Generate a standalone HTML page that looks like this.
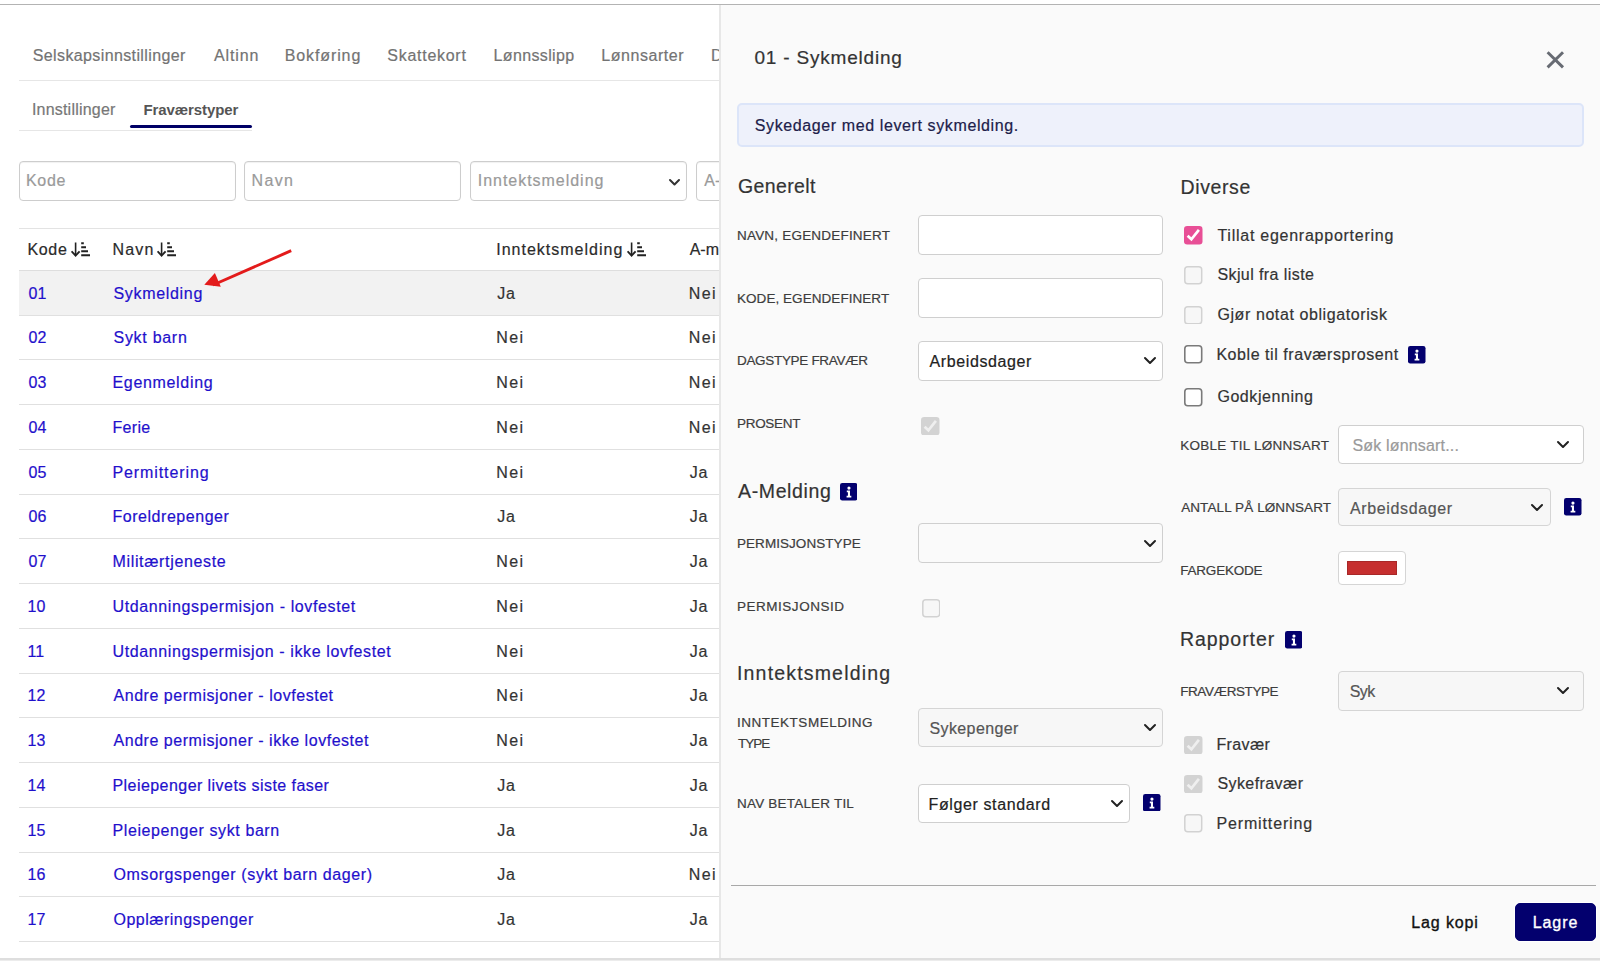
<!DOCTYPE html>
<html><head><meta charset="utf-8"><style>
html,body{margin:0;padding:0;width:1600px;height:961px;overflow:hidden;background:#fff;position:relative}
body{font-family:"Liberation Sans",sans-serif}
.t{position:absolute;white-space:nowrap;line-height:normal}
</style></head><body>
<div style="position:absolute;left:0px;top:4px;width:1600px;height:1px;background:#b3b3b3"></div>
<div style="position:absolute;left:19px;top:80px;width:701px;height:1px;background:#e6e6e6"></div>
<div style="position:absolute;left:130px;top:125px;width:122px;height:3px;background:#000066;border-radius:1.5px"></div>
<div style="position:absolute;left:19px;top:130px;width:233px;height:1px;background:#e6e6e6"></div>
<div style="position:absolute;left:19px;top:161px;width:217px;height:40px;box-sizing:border-box;background:#fff;border:1px solid #cdcdcd;border-radius:4px;box-shadow:inset 0 1px 1px rgba(0,0,0,0.06)"></div>
<div style="position:absolute;left:244px;top:161px;width:217px;height:40px;box-sizing:border-box;background:#fff;border:1px solid #cdcdcd;border-radius:4px;box-shadow:inset 0 1px 1px rgba(0,0,0,0.06)"></div>
<div style="position:absolute;left:470px;top:161px;width:217px;height:40px;box-sizing:border-box;background:#fff;border:1px solid #cdcdcd;border-radius:4px;box-shadow:inset 0 1px 1px rgba(0,0,0,0.06)"></div>
<div style="position:absolute;left:696px;top:161px;width:217px;height:40px;box-sizing:border-box;background:#fff;border:1px solid #cdcdcd;border-radius:4px;box-shadow:inset 0 1px 1px rgba(0,0,0,0.06)"></div>
<svg style="position:absolute;left:667.4px;top:176.5px" width="15" height="10.5"><path d="M3 3 L7.5 7.5 L12 3" fill="none" stroke="#333" stroke-width="2" stroke-linecap="round" stroke-linejoin="round"/></svg>
<div style="position:absolute;left:19px;top:228px;width:701px;height:1px;background:#e3e3e3"></div>
<svg style="position:absolute;left:71px;top:242px" width="20" height="15" viewBox="0 0 20 15"><path d="M4.6 0.5V13" stroke="#222" stroke-width="1.6" fill="none"/><path d="M0.6 9.3L4.6 13.6L8.6 9.3" stroke="#222" stroke-width="1.9" fill="none" stroke-linejoin="miter"/><path d="M10.2 1.2h2.6M10.2 5.2h4.8M10.2 9.2h6.8M10.2 13.2h8.8" stroke="#222" stroke-width="1.9" fill="none"/></svg>
<svg style="position:absolute;left:157px;top:242px" width="20" height="15" viewBox="0 0 20 15"><path d="M4.6 0.5V13" stroke="#222" stroke-width="1.6" fill="none"/><path d="M0.6 9.3L4.6 13.6L8.6 9.3" stroke="#222" stroke-width="1.9" fill="none" stroke-linejoin="miter"/><path d="M10.2 1.2h2.6M10.2 5.2h4.8M10.2 9.2h6.8M10.2 13.2h8.8" stroke="#222" stroke-width="1.9" fill="none"/></svg>
<svg style="position:absolute;left:626.9px;top:242px" width="20" height="15" viewBox="0 0 20 15"><path d="M4.6 0.5V13" stroke="#222" stroke-width="1.6" fill="none"/><path d="M0.6 9.3L4.6 13.6L8.6 9.3" stroke="#222" stroke-width="1.9" fill="none" stroke-linejoin="miter"/><path d="M10.2 1.2h2.6M10.2 5.2h4.8M10.2 9.2h6.8M10.2 13.2h8.8" stroke="#222" stroke-width="1.9" fill="none"/></svg>
<div style="position:absolute;left:19px;top:270px;width:701px;height:1px;background:#dedede"></div>
<div style="position:absolute;left:19px;top:271px;width:701px;height:44px;background:#f2f2f2"></div>
<div style="position:absolute;left:19px;top:315px;width:701px;height:1px;background:#e0e0e0"></div>
<div style="position:absolute;left:19px;top:359px;width:701px;height:1px;background:#e0e0e0"></div>
<div style="position:absolute;left:19px;top:404px;width:701px;height:1px;background:#e0e0e0"></div>
<div style="position:absolute;left:19px;top:449px;width:701px;height:1px;background:#e0e0e0"></div>
<div style="position:absolute;left:19px;top:494px;width:701px;height:1px;background:#e0e0e0"></div>
<div style="position:absolute;left:19px;top:538px;width:701px;height:1px;background:#e0e0e0"></div>
<div style="position:absolute;left:19px;top:583px;width:701px;height:1px;background:#e0e0e0"></div>
<div style="position:absolute;left:19px;top:628px;width:701px;height:1px;background:#e0e0e0"></div>
<div style="position:absolute;left:19px;top:673px;width:701px;height:1px;background:#e0e0e0"></div>
<div style="position:absolute;left:19px;top:717px;width:701px;height:1px;background:#e0e0e0"></div>
<div style="position:absolute;left:19px;top:762px;width:701px;height:1px;background:#e0e0e0"></div>
<div style="position:absolute;left:19px;top:807px;width:701px;height:1px;background:#e0e0e0"></div>
<div style="position:absolute;left:19px;top:852px;width:701px;height:1px;background:#e0e0e0"></div>
<div style="position:absolute;left:19px;top:896px;width:701px;height:1px;background:#e0e0e0"></div>
<div style="position:absolute;left:19px;top:941px;width:701px;height:1px;background:#e0e0e0"></div>
<div style="position:absolute;left:0px;top:958px;width:1600px;height:3px;background:#dedede"></div>
<div style="position:absolute;left:0px;top:960px;width:1600px;height:1px;background:#ececec"></div>
<svg style="position:absolute;left:0;top:0" width="720" height="400"><path d="M291.2 250.7L213 285" stroke="#e31b1b" stroke-width="2.9" fill="none"/><path d="M204.3 284.7L214.9 273L220.8 286.75Z" fill="#e31b1b"/></svg>
<div class="t" style="left:32.80px;top:47.00px;font-size:16px;color:#737373;letter-spacing:0.378px;-webkit-text-stroke:0.2px #737373">Selskapsinnstillinger</div>
<div class="t" style="left:214.00px;top:47.00px;font-size:16px;color:#737373;letter-spacing:0.895px;-webkit-text-stroke:0.2px #737373">Altinn</div>
<div class="t" style="left:284.70px;top:47.00px;font-size:16px;color:#737373;letter-spacing:0.891px;-webkit-text-stroke:0.2px #737373">Bokføring</div>
<div class="t" style="left:387.30px;top:47.00px;font-size:16px;color:#737373;letter-spacing:0.724px;-webkit-text-stroke:0.2px #737373">Skattekort</div>
<div class="t" style="left:493.50px;top:47.00px;font-size:16px;color:#737373;letter-spacing:0.369px;-webkit-text-stroke:0.2px #737373">Lønnsslipp</div>
<div class="t" style="left:601.30px;top:47.00px;font-size:16px;color:#737373;letter-spacing:0.540px;-webkit-text-stroke:0.2px #737373">Lønnsarter</div>
<div class="t" style="left:711.00px;top:47.00px;font-size:16px;color:#737373;letter-spacing:0.000px;-webkit-text-stroke:0.2px #737373">Dimensjoner</div>
<div class="t" style="left:31.90px;top:100.70px;font-size:16px;color:#777;letter-spacing:0.208px;-webkit-text-stroke:0.2px #777">Innstillinger</div>
<div class="t" style="left:143.40px;top:100.70px;font-size:15px;color:#555;letter-spacing:-0.077px;font-weight:700">Fraværstyper</div>
<div class="t" style="left:26.00px;top:172.25px;font-size:16px;color:#9a9a9a;letter-spacing:0.677px;-webkit-text-stroke:0.2px #9a9a9a">Kode</div>
<div class="t" style="left:251.50px;top:172.25px;font-size:16px;color:#9a9a9a;letter-spacing:1.349px;-webkit-text-stroke:0.2px #9a9a9a">Navn</div>
<div class="t" style="left:477.75px;top:172.25px;font-size:16px;color:#9a9a9a;letter-spacing:0.970px;-webkit-text-stroke:0.2px #9a9a9a">Inntektsmelding</div>
<div class="t" style="left:704.25px;top:172.25px;font-size:16px;color:#9a9a9a;letter-spacing:0.000px;-webkit-text-stroke:0.2px #9a9a9a">A-melding</div>
<div class="t" style="left:27.50px;top:241.00px;font-size:16px;color:#2b2b2b;letter-spacing:0.644px;-webkit-text-stroke:0.2px #2b2b2b">Kode</div>
<div class="t" style="left:112.50px;top:241.00px;font-size:16px;color:#2b2b2b;letter-spacing:1.182px;-webkit-text-stroke:0.2px #2b2b2b">Navn</div>
<div class="t" style="left:496.20px;top:241.00px;font-size:16px;color:#2b2b2b;letter-spacing:1.003px;-webkit-text-stroke:0.2px #2b2b2b">Inntektsmelding</div>
<div class="t" style="left:689.70px;top:241.00px;font-size:16px;color:#2b2b2b;letter-spacing:0.000px;-webkit-text-stroke:0.2px #2b2b2b">A-melding</div>
<div class="t" style="left:28.50px;top:284.75px;font-size:16px;color:#1f10cc;letter-spacing:0.000px;-webkit-text-stroke:0.2px #1f10cc">01</div>
<div class="t" style="left:113.50px;top:284.75px;font-size:16px;color:#1f10cc;letter-spacing:0.677px;-webkit-text-stroke:0.2px #1f10cc">Sykmelding</div>
<div class="t" style="left:497.20px;top:284.75px;font-size:16px;color:#333;letter-spacing:0.800px;-webkit-text-stroke:0.2px #333">Ja</div>
<div class="t" style="left:688.70px;top:284.75px;font-size:16px;color:#333;letter-spacing:1.423px;-webkit-text-stroke:0.2px #333">Nei</div>
<div class="t" style="left:28.50px;top:329.48px;font-size:16px;color:#1f10cc;letter-spacing:0.000px;-webkit-text-stroke:0.2px #1f10cc">02</div>
<div class="t" style="left:113.50px;top:329.48px;font-size:16px;color:#1f10cc;letter-spacing:0.714px;-webkit-text-stroke:0.2px #1f10cc">Sykt barn</div>
<div class="t" style="left:496.20px;top:329.48px;font-size:16px;color:#333;letter-spacing:1.423px;-webkit-text-stroke:0.2px #333">Nei</div>
<div class="t" style="left:688.70px;top:329.48px;font-size:16px;color:#333;letter-spacing:1.423px;-webkit-text-stroke:0.2px #333">Nei</div>
<div class="t" style="left:28.50px;top:374.22px;font-size:16px;color:#1f10cc;letter-spacing:0.000px;-webkit-text-stroke:0.2px #1f10cc">03</div>
<div class="t" style="left:112.50px;top:374.22px;font-size:16px;color:#1f10cc;letter-spacing:0.670px;-webkit-text-stroke:0.2px #1f10cc">Egenmelding</div>
<div class="t" style="left:496.20px;top:374.22px;font-size:16px;color:#333;letter-spacing:1.423px;-webkit-text-stroke:0.2px #333">Nei</div>
<div class="t" style="left:688.70px;top:374.22px;font-size:16px;color:#333;letter-spacing:1.423px;-webkit-text-stroke:0.2px #333">Nei</div>
<div class="t" style="left:28.50px;top:418.95px;font-size:16px;color:#1f10cc;letter-spacing:0.000px;-webkit-text-stroke:0.2px #1f10cc">04</div>
<div class="t" style="left:112.50px;top:418.95px;font-size:16px;color:#1f10cc;letter-spacing:0.311px;-webkit-text-stroke:0.2px #1f10cc">Ferie</div>
<div class="t" style="left:496.20px;top:418.95px;font-size:16px;color:#333;letter-spacing:1.423px;-webkit-text-stroke:0.2px #333">Nei</div>
<div class="t" style="left:688.70px;top:418.95px;font-size:16px;color:#333;letter-spacing:1.423px;-webkit-text-stroke:0.2px #333">Nei</div>
<div class="t" style="left:28.50px;top:463.68px;font-size:16px;color:#1f10cc;letter-spacing:0.000px;-webkit-text-stroke:0.2px #1f10cc">05</div>
<div class="t" style="left:112.50px;top:463.68px;font-size:16px;color:#1f10cc;letter-spacing:0.895px;-webkit-text-stroke:0.2px #1f10cc">Permittering</div>
<div class="t" style="left:496.20px;top:463.68px;font-size:16px;color:#333;letter-spacing:1.423px;-webkit-text-stroke:0.2px #333">Nei</div>
<div class="t" style="left:689.70px;top:463.68px;font-size:16px;color:#333;letter-spacing:0.800px;-webkit-text-stroke:0.2px #333">Ja</div>
<div class="t" style="left:28.50px;top:508.41px;font-size:16px;color:#1f10cc;letter-spacing:0.000px;-webkit-text-stroke:0.2px #1f10cc">06</div>
<div class="t" style="left:112.50px;top:508.41px;font-size:16px;color:#1f10cc;letter-spacing:0.533px;-webkit-text-stroke:0.2px #1f10cc">Foreldrepenger</div>
<div class="t" style="left:497.20px;top:508.41px;font-size:16px;color:#333;letter-spacing:0.800px;-webkit-text-stroke:0.2px #333">Ja</div>
<div class="t" style="left:689.70px;top:508.41px;font-size:16px;color:#333;letter-spacing:0.800px;-webkit-text-stroke:0.2px #333">Ja</div>
<div class="t" style="left:28.50px;top:553.15px;font-size:16px;color:#1f10cc;letter-spacing:0.000px;-webkit-text-stroke:0.2px #1f10cc">07</div>
<div class="t" style="left:112.50px;top:553.15px;font-size:16px;color:#1f10cc;letter-spacing:0.655px;-webkit-text-stroke:0.2px #1f10cc">Militærtjeneste</div>
<div class="t" style="left:496.20px;top:553.15px;font-size:16px;color:#333;letter-spacing:1.423px;-webkit-text-stroke:0.2px #333">Nei</div>
<div class="t" style="left:689.70px;top:553.15px;font-size:16px;color:#333;letter-spacing:0.800px;-webkit-text-stroke:0.2px #333">Ja</div>
<div class="t" style="left:27.50px;top:597.88px;font-size:16px;color:#1f10cc;letter-spacing:0.000px;-webkit-text-stroke:0.2px #1f10cc">10</div>
<div class="t" style="left:112.50px;top:597.88px;font-size:16px;color:#1f10cc;letter-spacing:0.620px;-webkit-text-stroke:0.2px #1f10cc">Utdanningspermisjon - lovfestet</div>
<div class="t" style="left:496.20px;top:597.88px;font-size:16px;color:#333;letter-spacing:1.423px;-webkit-text-stroke:0.2px #333">Nei</div>
<div class="t" style="left:689.70px;top:597.88px;font-size:16px;color:#333;letter-spacing:0.800px;-webkit-text-stroke:0.2px #333">Ja</div>
<div class="t" style="left:27.50px;top:642.61px;font-size:16px;color:#1f10cc;letter-spacing:0.000px;-webkit-text-stroke:0.2px #1f10cc">11</div>
<div class="t" style="left:112.50px;top:642.61px;font-size:16px;color:#1f10cc;letter-spacing:0.604px;-webkit-text-stroke:0.2px #1f10cc">Utdanningspermisjon - ikke lovfestet</div>
<div class="t" style="left:496.20px;top:642.61px;font-size:16px;color:#333;letter-spacing:1.423px;-webkit-text-stroke:0.2px #333">Nei</div>
<div class="t" style="left:689.70px;top:642.61px;font-size:16px;color:#333;letter-spacing:0.800px;-webkit-text-stroke:0.2px #333">Ja</div>
<div class="t" style="left:27.50px;top:687.35px;font-size:16px;color:#1f10cc;letter-spacing:0.000px;-webkit-text-stroke:0.2px #1f10cc">12</div>
<div class="t" style="left:113.50px;top:687.35px;font-size:16px;color:#1f10cc;letter-spacing:0.536px;-webkit-text-stroke:0.2px #1f10cc">Andre permisjoner - lovfestet</div>
<div class="t" style="left:496.20px;top:687.35px;font-size:16px;color:#333;letter-spacing:1.423px;-webkit-text-stroke:0.2px #333">Nei</div>
<div class="t" style="left:689.70px;top:687.35px;font-size:16px;color:#333;letter-spacing:0.800px;-webkit-text-stroke:0.2px #333">Ja</div>
<div class="t" style="left:27.50px;top:732.08px;font-size:16px;color:#1f10cc;letter-spacing:0.000px;-webkit-text-stroke:0.2px #1f10cc">13</div>
<div class="t" style="left:113.50px;top:732.08px;font-size:16px;color:#1f10cc;letter-spacing:0.531px;-webkit-text-stroke:0.2px #1f10cc">Andre permisjoner - ikke lovfestet</div>
<div class="t" style="left:496.20px;top:732.08px;font-size:16px;color:#333;letter-spacing:1.423px;-webkit-text-stroke:0.2px #333">Nei</div>
<div class="t" style="left:689.70px;top:732.08px;font-size:16px;color:#333;letter-spacing:0.800px;-webkit-text-stroke:0.2px #333">Ja</div>
<div class="t" style="left:27.50px;top:776.81px;font-size:16px;color:#1f10cc;letter-spacing:0.000px;-webkit-text-stroke:0.2px #1f10cc">14</div>
<div class="t" style="left:112.50px;top:776.81px;font-size:16px;color:#1f10cc;letter-spacing:0.440px;-webkit-text-stroke:0.2px #1f10cc">Pleiepenger livets siste faser</div>
<div class="t" style="left:497.20px;top:776.81px;font-size:16px;color:#333;letter-spacing:0.800px;-webkit-text-stroke:0.2px #333">Ja</div>
<div class="t" style="left:689.70px;top:776.81px;font-size:16px;color:#333;letter-spacing:0.800px;-webkit-text-stroke:0.2px #333">Ja</div>
<div class="t" style="left:27.50px;top:821.55px;font-size:16px;color:#1f10cc;letter-spacing:0.000px;-webkit-text-stroke:0.2px #1f10cc">15</div>
<div class="t" style="left:112.50px;top:821.55px;font-size:16px;color:#1f10cc;letter-spacing:0.597px;-webkit-text-stroke:0.2px #1f10cc">Pleiepenger sykt barn</div>
<div class="t" style="left:497.20px;top:821.55px;font-size:16px;color:#333;letter-spacing:0.800px;-webkit-text-stroke:0.2px #333">Ja</div>
<div class="t" style="left:689.70px;top:821.55px;font-size:16px;color:#333;letter-spacing:0.800px;-webkit-text-stroke:0.2px #333">Ja</div>
<div class="t" style="left:27.50px;top:866.28px;font-size:16px;color:#1f10cc;letter-spacing:0.000px;-webkit-text-stroke:0.2px #1f10cc">16</div>
<div class="t" style="left:113.50px;top:866.28px;font-size:16px;color:#1f10cc;letter-spacing:0.618px;-webkit-text-stroke:0.2px #1f10cc">Omsorgspenger (sykt barn dager)</div>
<div class="t" style="left:497.20px;top:866.28px;font-size:16px;color:#333;letter-spacing:0.800px;-webkit-text-stroke:0.2px #333">Ja</div>
<div class="t" style="left:688.70px;top:866.28px;font-size:16px;color:#333;letter-spacing:1.423px;-webkit-text-stroke:0.2px #333">Nei</div>
<div class="t" style="left:27.50px;top:911.01px;font-size:16px;color:#1f10cc;letter-spacing:0.000px;-webkit-text-stroke:0.2px #1f10cc">17</div>
<div class="t" style="left:113.50px;top:911.01px;font-size:16px;color:#1f10cc;letter-spacing:0.487px;-webkit-text-stroke:0.2px #1f10cc">Opplæringspenger</div>
<div class="t" style="left:497.20px;top:911.01px;font-size:16px;color:#333;letter-spacing:0.800px;-webkit-text-stroke:0.2px #333">Ja</div>
<div class="t" style="left:689.70px;top:911.01px;font-size:16px;color:#333;letter-spacing:0.800px;-webkit-text-stroke:0.2px #333">Ja</div>
<div style="position:absolute;left:719px;top:5px;width:2px;height:953px;background:#e7e7e7"></div>
<div style="position:absolute;left:721px;top:5px;width:879px;height:953px;background:#fafafa"></div>
<svg style="position:absolute;left:1545px;top:49px" width="21" height="21" viewBox="0 0 21 21"><path d="M2.6 3.2L18 18.4M18 3.2L2.6 18.4" stroke="#676b73" stroke-width="2.9" fill="none"/></svg>
<div style="position:absolute;left:737px;top:103px;width:847px;height:44px;box-sizing:border-box;background:#eef1fb;border:2px solid #dce5f9;border-radius:5px"></div>
<svg style="position:absolute;left:839.5px;top:483px" width="17.5" height="17.5" viewBox="0 0 17 17"><rect x="0" y="0" width="17" height="17" rx="2.2" fill="#03006e"/><circle cx="8.7" cy="4.9" r="1.55" fill="#fff"/><path d="M6.6 7.3h3.1v5.2h1.3v1.7H6.4v-1.7h1.3V9h-1.1z" fill="#fff"/></svg>
<svg style="position:absolute;left:1284.7px;top:631.3px" width="17.5" height="17.5" viewBox="0 0 17 17"><rect x="0" y="0" width="17" height="17" rx="2.2" fill="#03006e"/><circle cx="8.7" cy="4.9" r="1.55" fill="#fff"/><path d="M6.6 7.3h3.1v5.2h1.3v1.7H6.4v-1.7h1.3V9h-1.1z" fill="#fff"/></svg>
<div style="position:absolute;left:917.5px;top:215px;width:245.5px;height:40px;box-sizing:border-box;background:#fff;border:1px solid #cfcfcf;border-radius:4px;"></div>
<div style="position:absolute;left:917.5px;top:278px;width:245.5px;height:40px;box-sizing:border-box;background:#fff;border:1px solid #cfcfcf;border-radius:4px;"></div>
<div style="position:absolute;left:917.5px;top:340.5px;width:245.5px;height:40.0px;box-sizing:border-box;background:#fff;border:1px solid #cfcfcf;border-radius:4px;"></div>
<svg style="position:absolute;left:1142.0px;top:355.0px" width="16" height="11"><path d="M3 3 L8.0 8 L13 3" fill="none" stroke="#222" stroke-width="2" stroke-linecap="round" stroke-linejoin="round"/></svg>
<svg style="position:absolute;left:921px;top:416.7px" width="18.5" height="18.5" viewBox="0 0 18.5 18.5"><rect x="0" y="0" width="18.5" height="18.5" rx="3.2" fill="#d3d3d3"/><path d="M3.6 9.7L7.4 13.3L14.9 3.8" stroke="#efefef" stroke-width="2.7" fill="none"/></svg>
<div style="position:absolute;left:917.5px;top:523px;width:245.5px;height:40px;box-sizing:border-box;background:#fafafa;border:1px solid #cfcfcf;border-radius:4px;"></div>
<svg style="position:absolute;left:1142.0px;top:537.5px" width="16" height="11"><path d="M3 3 L8.0 8 L13 3" fill="none" stroke="#222" stroke-width="2" stroke-linecap="round" stroke-linejoin="round"/></svg>
<svg style="position:absolute;left:921.5px;top:599px" width="18.5" height="18.5" viewBox="0 0 18.5 18.5"><rect x="0.8" y="0.8" width="16.9" height="16.9" rx="3" fill="#f7f7f7" stroke="#d2d2d2" stroke-width="1.5"/></svg>
<div style="position:absolute;left:917.5px;top:707.5px;width:245.5px;height:39.5px;box-sizing:border-box;background:#f7f7f7;border:1px solid #d5d5d5;border-radius:4px;"></div>
<svg style="position:absolute;left:1142.0px;top:721.7px" width="16" height="11"><path d="M3 3 L8.0 8 L13 3" fill="none" stroke="#222" stroke-width="2" stroke-linecap="round" stroke-linejoin="round"/></svg>
<div style="position:absolute;left:917.5px;top:783.5px;width:212.5px;height:39.0px;box-sizing:border-box;background:#fff;border:1px solid #cfcfcf;border-radius:4px;"></div>
<svg style="position:absolute;left:1109.3px;top:798.1px" width="16" height="11"><path d="M3 3 L8.0 8 L13 3" fill="none" stroke="#222" stroke-width="2" stroke-linecap="round" stroke-linejoin="round"/></svg>
<svg style="position:absolute;left:1143.2px;top:793.7px" width="17.5" height="17.5" viewBox="0 0 17 17"><rect x="0" y="0" width="17" height="17" rx="2.2" fill="#03006e"/><circle cx="8.7" cy="4.9" r="1.55" fill="#fff"/><path d="M6.6 7.3h3.1v5.2h1.3v1.7H6.4v-1.7h1.3V9h-1.1z" fill="#fff"/></svg>
<svg style="position:absolute;left:1184px;top:226px" width="18.5" height="18.5" viewBox="0 0 18.5 18.5"><rect x="0" y="0" width="18.5" height="18.5" rx="3.2" fill="#e84f96"/><path d="M3.6 9.7L7.4 13.3L14.9 3.8" stroke="#fff" stroke-width="2.7" fill="none"/></svg>
<svg style="position:absolute;left:1184px;top:266.3px" width="18.5" height="18.5" viewBox="0 0 18.5 18.5"><rect x="0.8" y="0.8" width="16.9" height="16.9" rx="3" fill="#f7f7f7" stroke="#d2d2d2" stroke-width="1.5"/></svg>
<svg style="position:absolute;left:1184px;top:305.5px" width="18.5" height="18.5" viewBox="0 0 18.5 18.5"><rect x="0.8" y="0.8" width="16.9" height="16.9" rx="3" fill="#f7f7f7" stroke="#d2d2d2" stroke-width="1.5"/></svg>
<svg style="position:absolute;left:1184px;top:345.2px" width="18.5" height="18.5" viewBox="0 0 18.5 18.5"><rect x="0.8" y="0.8" width="16.9" height="16.9" rx="3" fill="#fff" stroke="#7a7a7a" stroke-width="1.6"/></svg>
<svg style="position:absolute;left:1184px;top:388px" width="18.5" height="18.5" viewBox="0 0 18.5 18.5"><rect x="0.8" y="0.8" width="16.9" height="16.9" rx="3" fill="#fff" stroke="#7a7a7a" stroke-width="1.6"/></svg>
<svg style="position:absolute;left:1184px;top:735.5px" width="18.5" height="18.5" viewBox="0 0 18.5 18.5"><rect x="0" y="0" width="18.5" height="18.5" rx="3.2" fill="#d3d3d3"/><path d="M3.6 9.7L7.4 13.3L14.9 3.8" stroke="#efefef" stroke-width="2.7" fill="none"/></svg>
<svg style="position:absolute;left:1184px;top:774.5px" width="18.5" height="18.5" viewBox="0 0 18.5 18.5"><rect x="0" y="0" width="18.5" height="18.5" rx="3.2" fill="#d3d3d3"/><path d="M3.6 9.7L7.4 13.3L14.9 3.8" stroke="#efefef" stroke-width="2.7" fill="none"/></svg>
<svg style="position:absolute;left:1184px;top:814px" width="18.5" height="18.5" viewBox="0 0 18.5 18.5"><rect x="0.8" y="0.8" width="16.9" height="16.9" rx="3" fill="#f7f7f7" stroke="#d2d2d2" stroke-width="1.5"/></svg>
<svg style="position:absolute;left:1408.2px;top:346px" width="17.5" height="17.5" viewBox="0 0 17 17"><rect x="0" y="0" width="17" height="17" rx="2.2" fill="#03006e"/><circle cx="8.7" cy="4.9" r="1.55" fill="#fff"/><path d="M6.6 7.3h3.1v5.2h1.3v1.7H6.4v-1.7h1.3V9h-1.1z" fill="#fff"/></svg>
<div style="position:absolute;left:1338.4px;top:425px;width:245.5999999999999px;height:38.5px;box-sizing:border-box;background:#fff;border:1px solid #cfcfcf;border-radius:4px;"></div>
<svg style="position:absolute;left:1555.0px;top:438.5px" width="16" height="11"><path d="M3 3 L8.0 8 L13 3" fill="none" stroke="#222" stroke-width="2" stroke-linecap="round" stroke-linejoin="round"/></svg>
<div style="position:absolute;left:1338.4px;top:487.7px;width:212.19999999999982px;height:38.50000000000006px;box-sizing:border-box;background:#f7f7f7;border:1px solid #d5d5d5;border-radius:4px;"></div>
<svg style="position:absolute;left:1529.0px;top:501.5px" width="16" height="11"><path d="M3 3 L8.0 8 L13 3" fill="none" stroke="#222" stroke-width="2" stroke-linecap="round" stroke-linejoin="round"/></svg>
<svg style="position:absolute;left:1564.4px;top:498px" width="17.5" height="17.5" viewBox="0 0 17 17"><rect x="0" y="0" width="17" height="17" rx="2.2" fill="#03006e"/><circle cx="8.7" cy="4.9" r="1.55" fill="#fff"/><path d="M6.6 7.3h3.1v5.2h1.3v1.7H6.4v-1.7h1.3V9h-1.1z" fill="#fff"/></svg>
<div style="position:absolute;left:1338.4px;top:550.7px;width:67.59999999999991px;height:34.59999999999991px;box-sizing:border-box;background:#fff;border:1px solid #d5d5d5;border-radius:4px;"></div>
<div style="position:absolute;left:1346.7px;top:561.3px;width:50.799999999999955px;height:13.400000000000091px;background:#c62f2f;border:1px solid #a82828;box-sizing:border-box"></div>
<div style="position:absolute;left:1338.4px;top:670.6px;width:245.5999999999999px;height:40.0px;box-sizing:border-box;background:#f7f7f7;border:1px solid #d5d5d5;border-radius:4px;"></div>
<svg style="position:absolute;left:1555.0px;top:685.1px" width="16" height="11"><path d="M3 3 L8.0 8 L13 3" fill="none" stroke="#222" stroke-width="2" stroke-linecap="round" stroke-linejoin="round"/></svg>
<div style="position:absolute;left:731.25px;top:885px;width:864.75px;height:1px;background:#a8a8a8"></div>
<div style="position:absolute;left:1515.3px;top:903px;width:80.70000000000005px;height:38px;box-sizing:border-box;background:#03006e;border:1px solid #03006e;border-radius:5px;box-shadow:0 0 0 1px #fff"></div>
<div class="t" style="left:754.40px;top:47.40px;font-size:19px;color:#333;letter-spacing:0.803px;-webkit-text-stroke:0.2px #333">01 - Sykmelding</div>
<div class="t" style="left:754.75px;top:116.80px;font-size:16px;color:#20204a;letter-spacing:0.609px;-webkit-text-stroke:0.2px #20204a">Sykedager med levert sykmelding.</div>
<div class="t" style="left:738.10px;top:175.10px;font-size:19.5px;color:#333;letter-spacing:0.361px;-webkit-text-stroke:0.2px #333">Generelt</div>
<div class="t" style="left:1180.50px;top:175.50px;font-size:19.5px;color:#333;letter-spacing:0.608px;-webkit-text-stroke:0.2px #333">Diverse</div>
<div class="t" style="left:738.00px;top:480.30px;font-size:19.5px;color:#333;letter-spacing:0.632px;-webkit-text-stroke:0.2px #333">A-Melding</div>
<div class="t" style="left:737.00px;top:662.00px;font-size:19.5px;color:#333;letter-spacing:1.176px;-webkit-text-stroke:0.2px #333">Inntektsmelding</div>
<div class="t" style="left:1180.00px;top:627.60px;font-size:19.5px;color:#333;letter-spacing:0.935px;-webkit-text-stroke:0.2px #333">Rapporter</div>
<div class="t" style="left:737.00px;top:228.00px;font-size:13.5px;color:#3d3d3d;letter-spacing:0.204px;-webkit-text-stroke:0.2px #3d3d3d">NAVN, EGENDEFINERT</div>
<div class="t" style="left:737.00px;top:291.30px;font-size:13.5px;color:#3d3d3d;letter-spacing:0.051px;-webkit-text-stroke:0.2px #3d3d3d">KODE, EGENDEFINERT</div>
<div class="t" style="left:737.00px;top:353.20px;font-size:13.5px;color:#3d3d3d;letter-spacing:-0.319px;-webkit-text-stroke:0.2px #3d3d3d">DAGSTYPE FRAVÆR</div>
<div class="t" style="left:737.00px;top:415.70px;font-size:13.5px;color:#3d3d3d;letter-spacing:-0.294px;-webkit-text-stroke:0.2px #3d3d3d">PROSENT</div>
<div class="t" style="left:737.00px;top:536.00px;font-size:13.5px;color:#3d3d3d;letter-spacing:0.052px;-webkit-text-stroke:0.2px #3d3d3d">PERMISJONSTYPE</div>
<div class="t" style="left:737.00px;top:599.30px;font-size:13.5px;color:#3d3d3d;letter-spacing:0.517px;-webkit-text-stroke:0.2px #3d3d3d">PERMISJONSID</div>
<div class="t" style="left:737.00px;top:714.80px;font-size:13.5px;color:#3d3d3d;letter-spacing:0.517px;-webkit-text-stroke:0.2px #3d3d3d">INNTEKTSMELDING</div>
<div class="t" style="left:738.00px;top:736.40px;font-size:13.5px;color:#3d3d3d;letter-spacing:-0.985px;-webkit-text-stroke:0.2px #3d3d3d">TYPE</div>
<div class="t" style="left:737.00px;top:796.30px;font-size:13.5px;color:#3d3d3d;letter-spacing:0.202px;-webkit-text-stroke:0.2px #3d3d3d">NAV BETALER TIL</div>
<div class="t" style="left:1180.20px;top:437.60px;font-size:13.5px;color:#3d3d3d;letter-spacing:0.244px;-webkit-text-stroke:0.2px #3d3d3d">KOBLE TIL LØNNSART</div>
<div class="t" style="left:1181.20px;top:500.20px;font-size:13.5px;color:#3d3d3d;letter-spacing:0.091px;-webkit-text-stroke:0.2px #3d3d3d">ANTALL PÅ LØNNSART</div>
<div class="t" style="left:1180.20px;top:563.10px;font-size:13.5px;color:#3d3d3d;letter-spacing:-0.202px;-webkit-text-stroke:0.2px #3d3d3d">FARGEKODE</div>
<div class="t" style="left:1180.20px;top:683.60px;font-size:13.5px;color:#3d3d3d;letter-spacing:-0.411px;-webkit-text-stroke:0.2px #3d3d3d">FRAVÆRSTYPE</div>
<div class="t" style="left:929.50px;top:353.00px;font-size:16px;color:#222;letter-spacing:0.605px;-webkit-text-stroke:0.2px #222">Arbeidsdager</div>
<div class="t" style="left:929.50px;top:719.50px;font-size:16px;color:#555;letter-spacing:0.382px;-webkit-text-stroke:0.2px #555">Sykepenger</div>
<div class="t" style="left:928.50px;top:795.50px;font-size:16px;color:#222;letter-spacing:0.619px;-webkit-text-stroke:0.2px #222">Følger standard</div>
<div class="t" style="left:1217.40px;top:227.40px;font-size:16px;color:#333;letter-spacing:0.750px;-webkit-text-stroke:0.2px #333">Tillat egenrapportering</div>
<div class="t" style="left:1217.40px;top:266.40px;font-size:16px;color:#333;letter-spacing:0.415px;-webkit-text-stroke:0.2px #333">Skjul fra liste</div>
<div class="t" style="left:1217.40px;top:306.40px;font-size:16px;color:#333;letter-spacing:0.591px;-webkit-text-stroke:0.2px #333">Gjør notat obligatorisk</div>
<div class="t" style="left:1216.40px;top:346.20px;font-size:16px;color:#333;letter-spacing:0.556px;-webkit-text-stroke:0.2px #333">Koble til fraværsprosent</div>
<div class="t" style="left:1217.40px;top:388.40px;font-size:16px;color:#333;letter-spacing:0.565px;-webkit-text-stroke:0.2px #333">Godkjenning</div>
<div class="t" style="left:1216.40px;top:735.70px;font-size:16px;color:#333;letter-spacing:0.375px;-webkit-text-stroke:0.2px #333">Fravær</div>
<div class="t" style="left:1217.40px;top:775.10px;font-size:16px;color:#333;letter-spacing:0.426px;-webkit-text-stroke:0.2px #333">Sykefravær</div>
<div class="t" style="left:1216.40px;top:814.50px;font-size:16px;color:#333;letter-spacing:0.868px;-webkit-text-stroke:0.2px #333">Permittering</div>
<div class="t" style="left:1352.40px;top:436.50px;font-size:16px;color:#9a9a9a;letter-spacing:0.173px;-webkit-text-stroke:0.2px #9a9a9a">Søk lønnsart...</div>
<div class="t" style="left:1350.00px;top:499.50px;font-size:16px;color:#555;letter-spacing:0.632px;-webkit-text-stroke:0.2px #555">Arbeidsdager</div>
<div class="t" style="left:1349.70px;top:683.00px;font-size:16px;color:#555;letter-spacing:-0.586px;-webkit-text-stroke:0.2px #555">Syk</div>
<div class="t" style="left:1411.30px;top:913.70px;font-size:16px;color:#111;letter-spacing:0.866px;-webkit-text-stroke:0.35px #111">Lag kopi</div>
<div class="t" style="left:1532.70px;top:913.70px;font-size:16px;color:#fff;letter-spacing:0.919px;-webkit-text-stroke:0.35px #fff">Lagre</div>
</body></html>
